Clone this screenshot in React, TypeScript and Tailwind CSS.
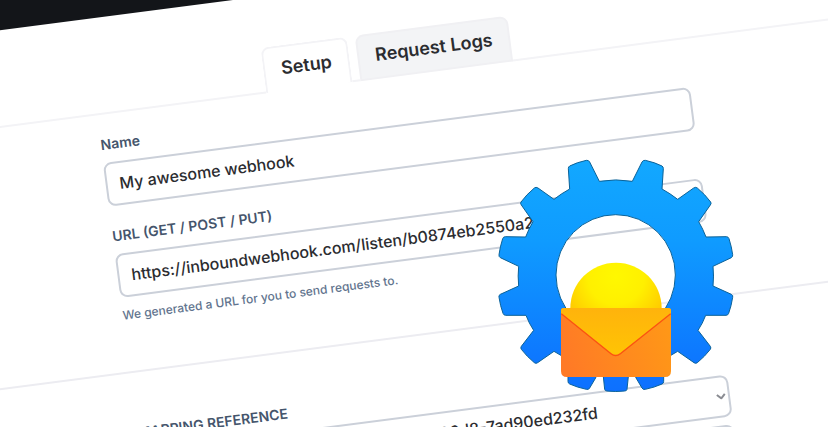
import { useState } from "react";

const labelClass = "block text-sm leading-5 font-semibold text-slate-600";
const fieldClass =
  "block w-full rounded-lg border-2 border-[#cbd0d9] bg-white px-3 text-base leading-6 font-medium text-[#2b2c30] outline-none";

function GearLogo() {
  return (
    <svg viewBox="0 0 810 750" className="absolute top-[150px] left-[480px] h-[250px] w-[270px]" role="img" aria-label="Inbound webhook logo">
      <defs>
        <linearGradient id="gear" x1="0" y1="0" x2="0" y2="1">
          <stop offset="0" stopColor="#12a8ff" />
          <stop offset="0.35" stopColor="#0f9bff" />
          <stop offset="0.85" stopColor="#0d78ff" />
          <stop offset="1" stopColor="#0d70ff" />
        </linearGradient>
        <radialGradient id="sun" cx="0.5" cy="0.15" r="0.62">
          <stop offset="0" stopColor="#fff800" />
          <stop offset="0.5" stopColor="#fff000" />
          <stop offset="1" stopColor="#ffc800" />
        </radialGradient>
        <linearGradient id="body" x1="0" y1="0.6" x2="1" y2="0.4">
          <stop offset="0" stopColor="#ff7a26" />
          <stop offset="1" stopColor="#ff9717" />
        </linearGradient>
        <linearGradient id="flap" x1="0" y1="0" x2="0" y2="1">
          <stop offset="0" stopColor="#ffb30c" />
          <stop offset="1" stopColor="#ffc404" />
        </linearGradient>
      </defs>
      <path
        fill="url(#gear)"
        stroke="#0b6298"
        strokeWidth="3"
        strokeLinejoin="round"
        fillRule="evenodd"
        d="M358 94 A290 290 0 0 1 457 94 L486 36 Q489 30 496 31 Q524 37 546 48 Q550 50 550 56 L546 117 Q570 130 593 148 L641 114 Q647 110 652 114 Q676 134 692 156 Q695 160 691 165 L656 215 Q669 237 678 261 L739 260 Q745 260 747 266 Q755 291 758 314 Q759 320 754 323 L699 349 Q702 378 699 408 L754 433 Q760 436 758 442 Q754 468 746 490 Q744 496 738 496 L677 496 Q668 520 654 541 L691 589 Q694 594 691 598 Q674 620 652 638 Q647 642 642 638 L593 604 L530 641 L467 682 L486 714 Q489 720 496 718 Q524 712 546 702 Q551 700 551 694 L551 670 L446 670 L441 718 Q440 723 434 723 Q407 726 381 723 Q375 723 374 718 L369 670 L264 670 L264 694 Q264 700 269 702 Q291 712 319 718 Q326 720 329 714 L348 682 L285 641 L222 604 L173 638 Q168 642 163 638 Q141 620 124 598 Q121 594 124 589 L161 541 Q147 520 138 496 L77 496 Q71 496 69 490 Q61 468 57 442 Q55 436 61 433 L116 408 Q113 378 116 349 L61 323 Q56 320 57 314 Q60 291 68 266 Q70 260 76 260 L137 261 Q146 237 159 215 L124 165 Q120 160 123 156 Q139 134 163 114 Q168 110 174 114 L222 148 Q245 130 269 117 L265 56 Q265 50 269 48 Q291 37 319 31 Q326 30 329 36 Z M407 194 A179 181 0 0 0 407 556 A179 181 0 0 0 407 194 Z"
      />
      <circle cx="408" cy="475" r="137" fill="url(#sun)" />
      <path fill="url(#body)" d="M251 474 H565 Q573 474 573 482 V663 Q573 681 555 681 H261 Q243 681 243 663 V482 Q243 474 251 474 Z" />
      <path fill="url(#flap)" d="M243 490 V482 Q243 474 251 474 H565 Q573 474 573 482 V490 L421 610 Q407 622 393 610 Z" />
      <path fill="none" stroke="#fb5312" strokeWidth="4" d="M244 491 L393 611 Q407 622 421 611 L572 491" />
    </svg>
  );
}

export default function App() {
  const [name, setName] = useState("My awesome webhook");
  return (
    <div className="relative h-screen overflow-hidden bg-white font-[Inter,sans-serif]">
      <div className="-mx-16 origin-[64px_0] -rotate-[7.4deg]">
        <header className="h-[30px] bg-[#131519]" />
        <nav className="flex h-[97px] items-end pt-[51px] text-lg leading-6 font-semibold text-[#2b2c30]">
          <div className="w-[316px] self-stretch border-b-2 border-[#f3f3f6]" />
          <button className="h-[46px] rounded-t-lg border-2 border-b-0 border-[#f3f3f6] bg-white px-4 pb-[2px]">Setup</button>
          <div className="w-2 self-stretch border-b-2 border-[#f3f3f6]" />
          <button className="h-[46px] rounded-t-lg border-2 border-[#f0f0f3] bg-[#f3f4f6] px-4 pb-[2px]">Request Logs</button>
          <div className="flex-1 self-stretch border-b-2 border-[#f3f3f6]" />
        </nav>
        <main>
          <section className="border-b-2 border-[#ececf1] pt-5 pb-[46px] pl-[145px]">
            <div className="w-[592px]">
              <label htmlFor="name" className={labelClass}>Name</label>
              <input id="name" className={`${fieldClass} mt-2 h-11`} value={name} onChange={(e) => setName(e.target.value)} />
              <label htmlFor="url" className={`${labelClass} mt-5`}>URL (GET / POST / PUT)</label>
              <input id="url" readOnly className={`${fieldClass} mt-2 h-11`} value="https://inboundwebhook.com/listen/b0874eb2550a2" />
              <p className="mt-2 text-xs leading-5 font-medium text-slate-500">We generated a URL for you to send requests to.</p>
            </div>
          </section>
          <section className="pt-[50px] pl-[145px]">
            <div className="w-[592px]">
              <label htmlFor="mapping" className={labelClass}>MAPPING REFERENCE</label>
              <div className="relative mt-2">
                <select id="mapping" className={`${fieldClass} h-[42px] appearance-none`}>
                  <option>Latest request 5c1e7b40-93fa-4b2e-86d8-7ad90ed232fd</option>
                </select>
                <svg viewBox="0 0 10 6" className="pointer-events-none absolute top-[18px] right-1 h-[6px] w-[10px]" fill="none" stroke="#8a8c92" strokeWidth="2">
                  <path d="M1 1l4 4 4-4" />
                </svg>
              </div>
              <div className="mt-2 h-11 rounded-lg border-2 border-[#cbd0d9]" />
            </div>
          </section>
        </main>
      </div>
      <GearLogo />
    </div>
  );
}
